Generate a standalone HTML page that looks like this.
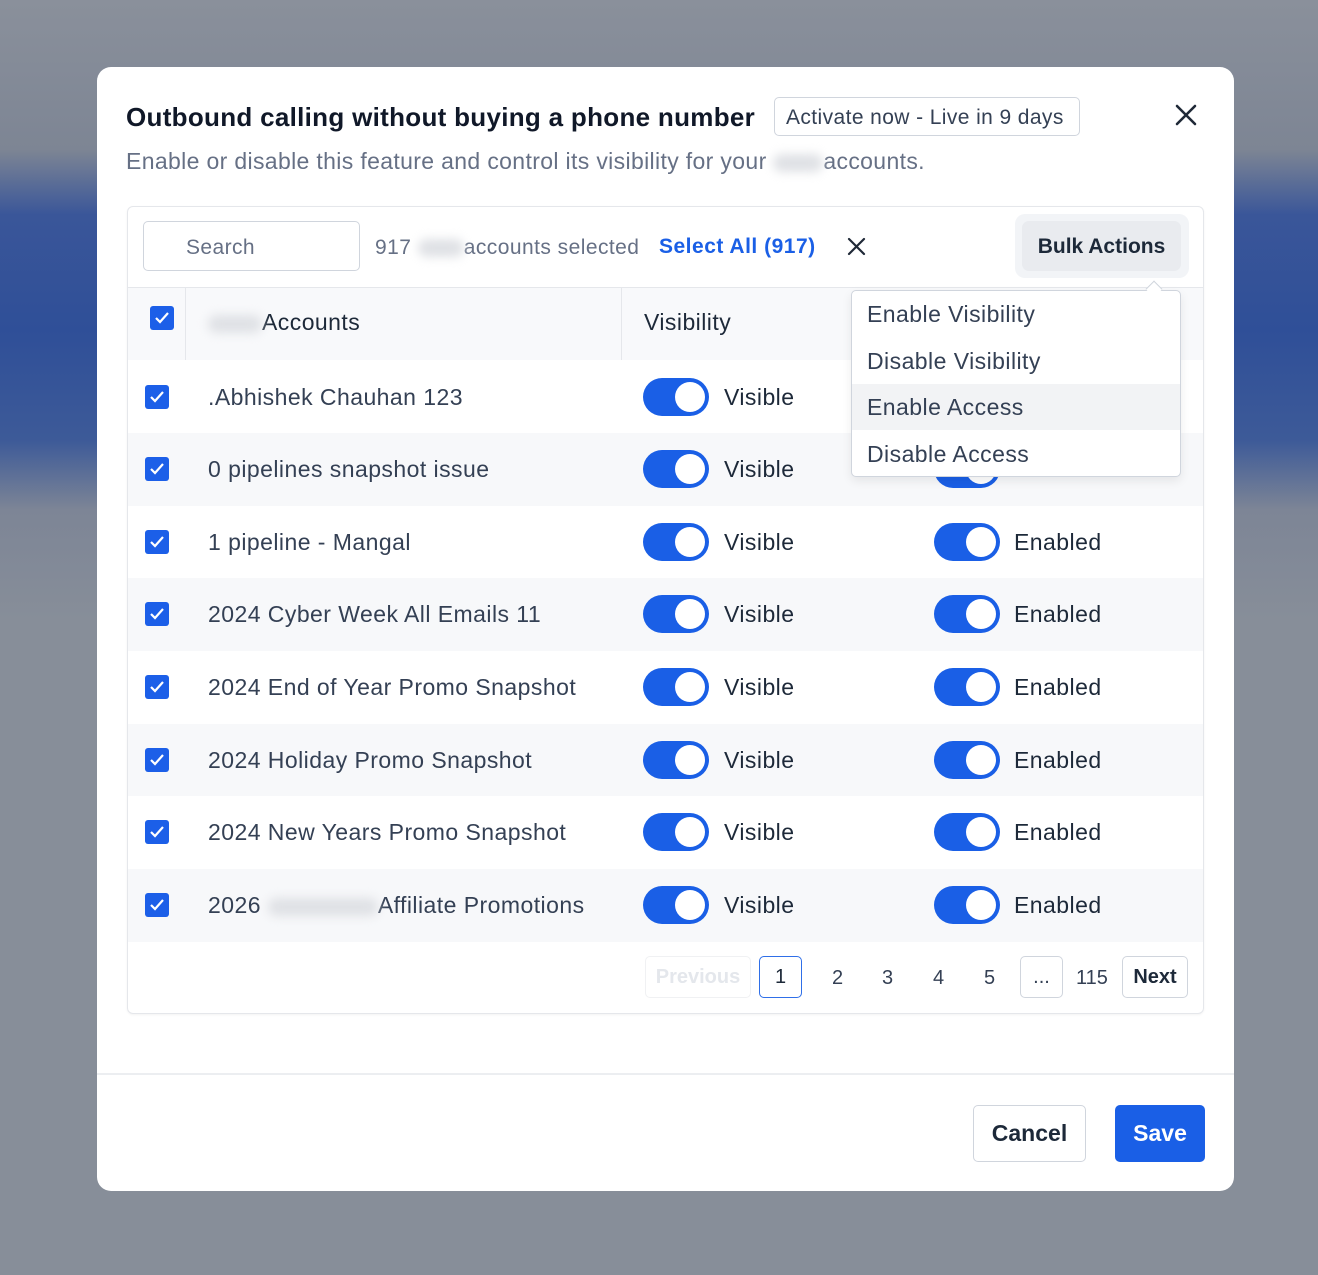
<!DOCTYPE html>
<html><head><meta charset="utf-8"><style>
*{box-sizing:border-box;margin:0;padding:0}
body{width:1318px;height:1275px;overflow:hidden;font-family:"Liberation Sans",sans-serif;background:linear-gradient(180deg,#8a909b 0px,#7d8594 150px,#3a5699 215px,#2f4f98 330px,#3d5a98 440px,#7d8596 510px,#878e99 620px,#878e99 1275px);position:relative;color:#1f2937}
.a{position:absolute}
.modal{left:97px;top:67px;width:1137px;height:1124px;background:#fff;border-radius:14px}
.card{left:127px;top:206px;width:1077px;height:808px;border:1px solid #e5e7eb;border-radius:6px;overflow:hidden;box-shadow:0 1px 2px rgba(0,0,0,.05)}
.row{left:128px;width:1075px;height:73px}
.cb{width:24px;height:24px;background:#1c5fe8;border-radius:3px}
.cb svg{position:absolute;left:4px;top:5px}
.tg{width:66px;height:38px;border-radius:19px;background:#1a5fe6}
.tg::after{content:"";position:absolute;right:4px;top:4px;width:30px;height:30px;border-radius:50%;background:#fff}
.t{font-size:23px;letter-spacing:0.45px;color:#344054;line-height:1}
.lb{font-size:23px;letter-spacing:0.45px;color:#1d2939;line-height:1}
.blur{display:inline-block;background:#dfe1e5;filter:blur(5px);height:18px;border-radius:9px;vertical-align:middle}
.pg{font-size:20px;color:#344054;line-height:1}
.pb{height:42px;border:1px solid #d0d5dd;border-radius:5px;text-align:center;line-height:40px;font-size:20px;color:#344054}
</style></head><body>
<div class="a modal"></div>
<div class="a" style="left:126px;top:102px;font-size:26px;letter-spacing:0.3px;font-weight:bold;color:#101828">Outbound calling without buying a phone number</div>
<div class="a" style="left:774px;top:97px;width:306px;height:39px;border:1px solid #d0d5dd;border-radius:5px;font-size:21px;letter-spacing:0.4px;color:#344054;line-height:39px;padding-left:11px">Activate now - Live in 9 days</div>
<svg class="a" style="left:1175px;top:104px" width="22" height="22" viewBox="0 0 22 22"><path d="M2 2L20 20M20 2L2 20" stroke="#1f2937" stroke-width="2.6" stroke-linecap="round"/></svg>
<div class="a" style="left:126px;top:148px;font-size:23px;letter-spacing:0.35px;color:#667085">Enable or disable this feature and control its visibility for your <span class="blur" style="width:50px"></span>accounts.</div>

<div class="a card"></div>
<div class="a" style="left:143px;top:221px;width:217px;height:50px;border:1px solid #d0d5dd;border-radius:5px;font-size:21px;letter-spacing:0.4px;color:#667085;line-height:52px;padding-left:42px">Search</div>
<div class="a" style="left:375px;top:236px;font-size:21px;letter-spacing:0.45px;color:#667085">917 <span class="blur" style="width:46px"></span>accounts selected</div>
<div class="a" style="left:659px;top:235px;font-size:21px;letter-spacing:0.5px;font-weight:bold;color:#1a5fe6">Select All (917)</div>
<svg class="a" style="left:847px;top:237px" width="19" height="19" viewBox="0 0 19 19"><path d="M2 2L17 17M17 2L2 17" stroke="#1f2937" stroke-width="2.2" stroke-linecap="round"/></svg>
<div class="a" style="left:1015px;top:214px;width:174px;height:64px;background:#f2f4f7;border-radius:10px"></div>
<div class="a" style="left:1022px;top:221px;width:159px;height:50px;background:#e9ebef;border-radius:7px;font-size:21px;font-weight:bold;color:#1d2939;text-align:center;line-height:52px">Bulk Actions</div>

<div class="a row" style="top:287px;height:73px;background:#f8f9fb;border-top:1px solid #e5e7eb"></div>
<div class="a" style="left:185px;top:288px;width:1px;height:72px;background:#e5e7eb"></div>
<div class="a" style="left:621px;top:288px;width:1px;height:72px;background:#e5e7eb"></div>
<div class="a cb" style="left:150px;top:306px"><svg width="16" height="14" viewBox="0 0 16 14"><path d="M2 7l4 4 8-9" stroke="#fff" stroke-width="2.2" fill="none"/></svg></div>
<div class="a lb" style="left:208px;top:311px"><span class="blur" style="width:54px"></span>Accounts</div>
<div class="a lb" style="left:644px;top:311px">Visibility</div>

<div class="a row" style="top:360px;background:#fff"></div>
<div class="a row" style="top:433px;background:#f7f8fa"></div>
<div class="a row" style="top:506px;background:#fff"></div>
<div class="a row" style="top:578px;background:#f7f8fa"></div>
<div class="a row" style="top:651px;background:#fff"></div>
<div class="a row" style="top:724px;background:#f7f8fa"></div>
<div class="a row" style="top:796px;background:#fff"></div>
<div class="a row" style="top:869px;background:#f7f8fa"></div>

<div class="a cb" style="left:145px;top:385px"><svg width="16" height="14" viewBox="0 0 16 14"><path d="M2 7l4 4 8-9" stroke="#fff" stroke-width="2.2" fill="none"/></svg></div>
<div class="a t" style="left:208px;top:386px">.Abhishek Chauhan 123</div>
<div class="a tg" style="left:643px;top:378px"></div><div class="a lb" style="left:724px;top:386px">Visible</div>
<div class="a tg" style="left:934px;top:378px"></div><div class="a lb" style="left:1014px;top:386px">Enabled</div>

<div class="a cb" style="left:145px;top:457px"><svg width="16" height="14" viewBox="0 0 16 14"><path d="M2 7l4 4 8-9" stroke="#fff" stroke-width="2.2" fill="none"/></svg></div>
<div class="a t" style="left:208px;top:458px">0 pipelines snapshot issue</div>
<div class="a tg" style="left:643px;top:450px"></div><div class="a lb" style="left:724px;top:458px">Visible</div>
<div class="a tg" style="left:934px;top:450px"></div><div class="a lb" style="left:1014px;top:458px">Enabled</div>

<div class="a cb" style="left:145px;top:530px"><svg width="16" height="14" viewBox="0 0 16 14"><path d="M2 7l4 4 8-9" stroke="#fff" stroke-width="2.2" fill="none"/></svg></div>
<div class="a t" style="left:208px;top:531px">1 pipeline - Mangal</div>
<div class="a tg" style="left:643px;top:523px"></div><div class="a lb" style="left:724px;top:531px">Visible</div>
<div class="a tg" style="left:934px;top:523px"></div><div class="a lb" style="left:1014px;top:531px">Enabled</div>

<div class="a cb" style="left:145px;top:602px"><svg width="16" height="14" viewBox="0 0 16 14"><path d="M2 7l4 4 8-9" stroke="#fff" stroke-width="2.2" fill="none"/></svg></div>
<div class="a t" style="left:208px;top:603px">2024 Cyber Week All Emails 11</div>
<div class="a tg" style="left:643px;top:595px"></div><div class="a lb" style="left:724px;top:603px">Visible</div>
<div class="a tg" style="left:934px;top:595px"></div><div class="a lb" style="left:1014px;top:603px">Enabled</div>

<div class="a cb" style="left:145px;top:675px"><svg width="16" height="14" viewBox="0 0 16 14"><path d="M2 7l4 4 8-9" stroke="#fff" stroke-width="2.2" fill="none"/></svg></div>
<div class="a t" style="left:208px;top:676px">2024 End of Year Promo Snapshot</div>
<div class="a tg" style="left:643px;top:668px"></div><div class="a lb" style="left:724px;top:676px">Visible</div>
<div class="a tg" style="left:934px;top:668px"></div><div class="a lb" style="left:1014px;top:676px">Enabled</div>

<div class="a cb" style="left:145px;top:748px"><svg width="16" height="14" viewBox="0 0 16 14"><path d="M2 7l4 4 8-9" stroke="#fff" stroke-width="2.2" fill="none"/></svg></div>
<div class="a t" style="left:208px;top:749px">2024 Holiday Promo Snapshot</div>
<div class="a tg" style="left:643px;top:741px"></div><div class="a lb" style="left:724px;top:749px">Visible</div>
<div class="a tg" style="left:934px;top:741px"></div><div class="a lb" style="left:1014px;top:749px">Enabled</div>

<div class="a cb" style="left:145px;top:820px"><svg width="16" height="14" viewBox="0 0 16 14"><path d="M2 7l4 4 8-9" stroke="#fff" stroke-width="2.2" fill="none"/></svg></div>
<div class="a t" style="left:208px;top:821px">2024 New Years Promo Snapshot</div>
<div class="a tg" style="left:643px;top:813px"></div><div class="a lb" style="left:724px;top:821px">Visible</div>
<div class="a tg" style="left:934px;top:813px"></div><div class="a lb" style="left:1014px;top:821px">Enabled</div>

<div class="a cb" style="left:145px;top:893px"><svg width="16" height="14" viewBox="0 0 16 14"><path d="M2 7l4 4 8-9" stroke="#fff" stroke-width="2.2" fill="none"/></svg></div>
<div class="a t" style="left:208px;top:894px">2026 <span class="blur" style="width:110px"></span>Affiliate Promotions</div>
<div class="a tg" style="left:643px;top:886px"></div><div class="a lb" style="left:724px;top:894px">Visible</div>
<div class="a tg" style="left:934px;top:886px"></div><div class="a lb" style="left:1014px;top:894px">Enabled</div>

<div class="a" style="left:851px;top:290px;width:330px;height:187px;background:#fff;border:1px solid #d0d5dd;border-radius:5px;box-shadow:0 4px 10px rgba(0,0,0,.08);overflow:hidden">
<div style="position:absolute;left:0;top:93px;width:100%;height:46px;background:#f2f3f5"></div>
</div>
<div class="a" style="left:1148px;top:283px;width:12px;height:12px;background:#fff;border-left:1px solid #d0d5dd;border-top:1px solid #d0d5dd;transform:rotate(45deg)"></div>
<div class="a t" style="left:867px;top:303px">Enable Visibility</div>
<div class="a t" style="left:867px;top:350px">Disable Visibility</div>
<div class="a t" style="left:867px;top:396px">Enable Access</div>
<div class="a t" style="left:867px;top:443px">Disable Access</div>

<div class="a pb" style="left:645px;top:956px;width:106px;color:#e4e7ec;border-color:#f0f1f3;font-weight:bold">Previous</div>
<div class="a pb" style="left:759px;top:956px;width:43px;border-color:#2f6fe8;color:#1d2939">1</div>
<div class="a pg" style="left:832px;top:968px">2</div>
<div class="a pg" style="left:882px;top:968px">3</div>
<div class="a pg" style="left:933px;top:968px">4</div>
<div class="a pg" style="left:984px;top:968px">5</div>
<div class="a pb" style="left:1020px;top:956px;width:43px;line-height:40px">...</div>
<div class="a pg" style="left:1076px;top:968px">115</div>
<div class="a pb" style="left:1122px;top:956px;width:66px;color:#1d2939;font-weight:bold">Next</div>

<div class="a" style="left:97px;top:1073px;width:1137px;height:2px;background:#eceef1"></div>
<div class="a" style="left:973px;top:1105px;width:113px;height:57px;border:1px solid #d0d5dd;border-radius:5px;text-align:center;line-height:55px;font-size:23px;color:#1d2939;font-weight:bold">Cancel</div>
<div class="a" style="left:1115px;top:1105px;width:90px;height:57px;background:#1a5fe6;border-radius:5px;text-align:center;line-height:57px;font-size:23px;color:#fff;font-weight:bold">Save</div>
</body></html>
